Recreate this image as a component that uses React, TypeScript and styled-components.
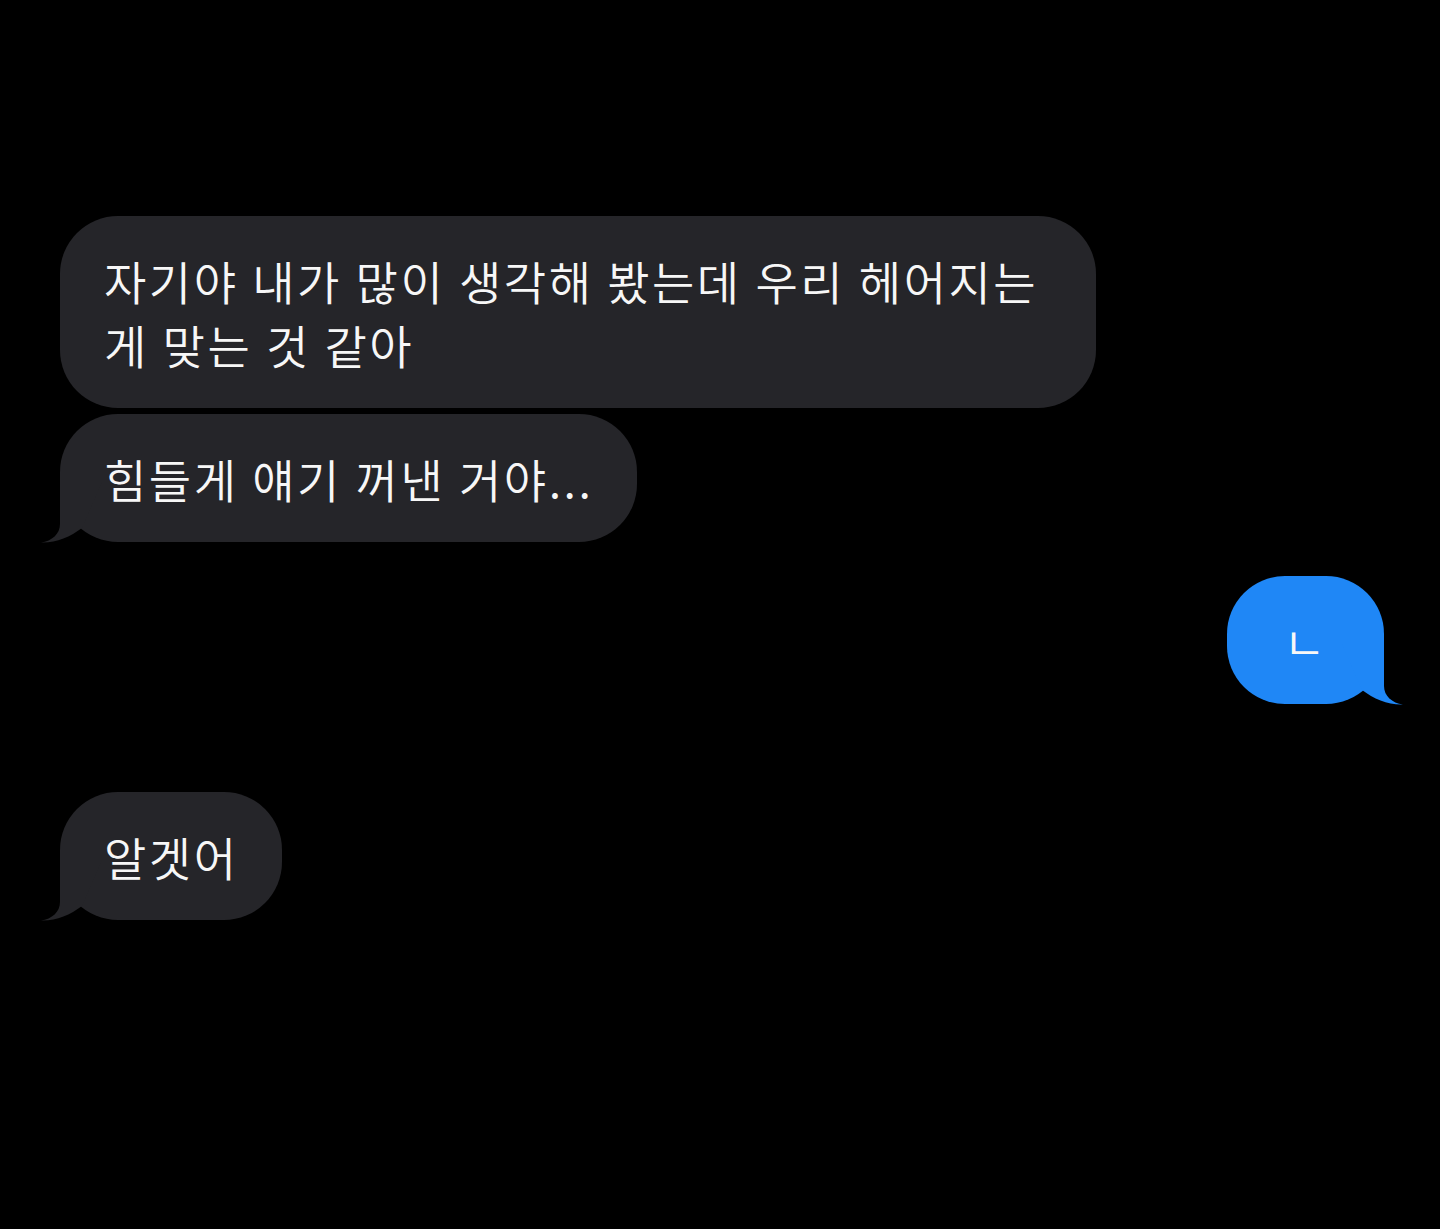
import React from "react";
import styled, { createGlobalStyle } from "styled-components";

const Global = createGlobalStyle`
  html, body {
    margin: 0;
    padding: 0;
    background: #000;
  }
  #root {
    min-height: 100vh;
    background: #000;
  }
`;

const Screen = styled.div`
  min-height: 1229px;
  background: #000;
  box-sizing: border-box;
  padding: 216px 56px 0 60px;
  display: flex;
  flex-direction: column;
  font-family: "Noto Sans CJK KR", "Noto Sans", sans-serif;
`;

const Row = styled.div<{ $out?: boolean; $gap?: number }>`
  display: flex;
  justify-content: ${(p) => (p.$out ? "flex-end" : "flex-start")};
  margin-top: ${(p) => p.$gap ?? 0}px;
`;

const Bubble = styled.div<{ $out?: boolean; $maxw?: number; $padx?: number }>`
  position: relative;
  box-sizing: border-box;
  max-width: ${(p) => p.$maxw ?? 1036}px;
  padding: 32px ${(p) => p.$padx ?? 44}px;
  border-radius: 58px;
  background: ${(p) => (p.$out ? "#1f87f6" : "#252529")};
  color: #f7f7f7;
  font-size: 46px;
  font-weight: 350;
  line-height: 64px;
  letter-spacing: 2.5px;
  word-spacing: 1px;
  word-break: keep-all;
`;

const Tail = styled.svg<{ $out?: boolean }>`
  position: absolute;
  bottom: 0;
  width: 70px;
  height: 60px;
  overflow: visible;
  ${(p) =>
    p.$out
      ? "right: -20px; transform: scaleX(-1);"
      : "left: -20px;"}
`;

const TailShape: React.FC<{ out?: boolean }> = ({ out }) => (
  <Tail $out={out} viewBox="0 0 70 60" aria-hidden>
    <path
      d="M20 0 L20 42 C20 52 12 59 1 60.5 C16 61 30 55 42 46 L62 0 Z"
      fill={out ? "#1f87f6" : "#252529"}
    />
  </Tail>
);

export default function App() {
  return (
    <>
      <Global />
      <Screen>
        <Row>
          <Bubble $maxw={1036}>
            자기야 내가 많이 생각해 봤는데 우리 헤어지는 게 맞는 것 같아
          </Bubble>
        </Row>
        <Row $gap={6}>
          <Bubble>
            힘들게 얘기 꺼낸 거야...
            <TailShape />
          </Bubble>
        </Row>
        <Row $out $gap={34}>
          <Bubble $out $padx={56}>
            ㄴ
            <TailShape out />
          </Bubble>
        </Row>
        <Row $gap={88}>
          <Bubble>
            알겟어
            <TailShape />
          </Bubble>
        </Row>
      </Screen>
    </>
  );
}
